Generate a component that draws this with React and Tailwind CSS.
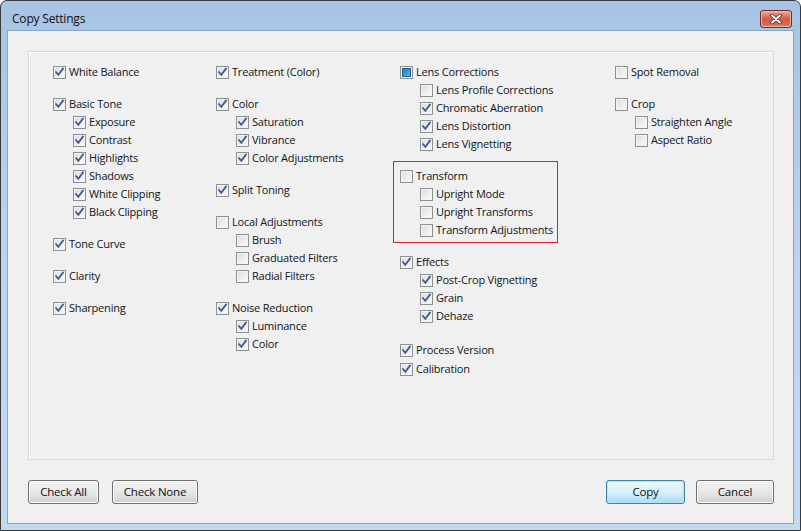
import React from "react";

const columns = [
  [
    { label: "White Balance", state: "on" },
    {
      label: "Basic Tone",
      state: "on",
      gap: "mt-[14px]",
      children: [
        ["Exposure", "on"],
        ["Contrast", "on"],
        ["Highlights", "on"],
        ["Shadows", "on"],
        ["White Clipping", "on"],
        ["Black Clipping", "on"],
      ],
    },
    { label: "Tone Curve", state: "on", gap: "mt-[14px]" },
    { label: "Clarity", state: "on", gap: "mt-[14px]" },
    { label: "Sharpening", state: "on", gap: "mt-[14px]" },
  ],
  [
    { label: "Treatment (Color)", state: "on" },
    {
      label: "Color",
      state: "on",
      gap: "mt-[14px]",
      children: [
        ["Saturation", "on"],
        ["Vibrance", "on"],
        ["Color Adjustments", "on"],
      ],
    },
    { label: "Split Toning", state: "on", gap: "mt-[14px]" },
    {
      label: "Local Adjustments",
      state: "off",
      gap: "mt-[14px]",
      children: [
        ["Brush", "off"],
        ["Graduated Filters", "off"],
        ["Radial Filters", "off"],
      ],
    },
    {
      label: "Noise Reduction",
      state: "on",
      gap: "mt-[14px]",
      children: [
        ["Luminance", "on"],
        ["Color", "on"],
      ],
    },
  ],
  [
    {
      label: "Lens Corrections",
      state: "mixed",
      children: [
        ["Lens Profile Corrections", "off"],
        ["Chromatic Aberration", "on"],
        ["Lens Distortion", "on"],
        ["Lens Vignetting", "on"],
      ],
    },
    {
      label: "Transform",
      state: "off",
      boxed: true,
      children: [
        ["Upright Mode", "off"],
        ["Upright Transforms", "off"],
        ["Transform Adjustments", "off"],
      ],
    },
    {
      label: "Effects",
      state: "on",
      gap: "mt-[10px]",
      children: [
        ["Post-Crop Vignetting", "on"],
        ["Grain", "on"],
        ["Dehaze", "on"],
      ],
    },
    { label: "Process Version", state: "on", gap: "mt-[16px]" },
    { label: "Calibration", state: "on", gap: "mt-[1px]" },
  ],
  [
    { label: "Spot Removal", state: "off" },
    {
      label: "Crop",
      state: "off",
      gap: "mt-[14px]",
      children: [
        ["Straighten Angle", "off"],
        ["Aspect Ratio", "off"],
      ],
    },
  ],
];

function Checkbox({ state }) {
  return (
    <span className="relative flex h-[13px] w-[13px] shrink-0 items-center justify-center border border-[#8e8f8f] bg-gradient-to-br from-[#dcdcdc] to-[#fbfbfb]">
      <span className="absolute inset-0 border border-[#f4f4f4]" />
      {state === "on" && (
        <svg width="11" height="11" viewBox="0 0 11 11" className="relative">
          <path
            d="M2 5.2 L4.3 7.8 L9 1.6"
            fill="none"
            stroke="#3f5a96"
            strokeWidth="1.8"
            strokeLinecap="square"
          />
        </svg>
      )}
      {state === "mixed" && (
        <span className="relative h-[9px] w-[9px] border border-[#1d5f8f] bg-gradient-to-br from-[#2b7cb4] via-[#3b97cb] to-[#64b8df]" />
      )}
    </span>
  );
}

function Row({ label, state, sub }) {
  return (
    <div className={`flex h-[18px] items-center ${sub ? "pl-[20px]" : ""}`}>
      <Checkbox state={state} />
      <span className="ml-[3px] whitespace-nowrap text-[#0f1522]">{label}</span>
    </div>
  );
}

function Group({ group }) {
  const body = (
    <>
      <Row label={group.label} state={group.state} />
      {group.children?.map(([label, state]) => (
        <Row key={label} label={label} state={state} sub />
      ))}
    </>
  );
  if (group.boxed) {
    return (
      <div className="ml-[-7px] mt-[8px] w-[165px] border border-[#e0212c] pb-[3px] pl-[6px] pt-[5px]">
        {body}
      </div>
    );
  }
  return <div className={group.gap || ""}>{body}</div>;
}

function Button({ children, primary, className }) {
  return (
    <button
      className={`flex h-[24px] items-center justify-center rounded-[3px] border ${
        primary
          ? "border-[#3c7fb1] bg-gradient-to-b from-[#eaf6fd] via-[#d9f0fc] to-[#a7d9f5] shadow-[inset_0_0_0_1px_#b9e3fb]"
          : "border-[#707070] bg-gradient-to-b from-[#f2f2f2] via-[#e8e8e8] to-[#d0d0d0] shadow-[inset_0_0_0_1px_#fcfcfc]"
      } text-[#111] ${className}`}
    >
      {children}
    </button>
  );
}

export default function App() {
  return (
    <div
      className="flex h-[531px] w-[801px] flex-col overflow-hidden rounded-t-[7px] border border-[#3a3a3a] bg-gradient-to-b from-[#a7c4e4] via-[#bcd4ee] to-[#c3d9f0] text-[11px] tracking-[-0.2px]"
      style={{ fontFamily: '"Segoe UI", "Open Sans", "Noto Sans", sans-serif' }}
    >
      <div className="flex h-[29px] shrink-0 items-center justify-between pl-[11px] pr-[8px] pt-[7px]">
        <span className="text-[12px] text-[#111]">Copy Settings</span>
        <div className="flex h-[18px] w-[32px] items-center justify-center rounded-[3px] border border-[#6e2a22] bg-gradient-to-b from-[#e9a99a] via-[#cf5a44] to-[#d8735c] shadow-[inset_0_0_0_1px_#f0b8a8]">
          <svg width="14" height="10" viewBox="0 0 14 10">
            <path
              d="M3 1.5 L11 8.5 M11 1.5 L3 8.5"
              stroke="#5a2a24"
              strokeWidth="3.6"
              strokeLinecap="round"
            />
            <path
              d="M3 1.5 L11 8.5 M11 1.5 L3 8.5"
              stroke="#ffffff"
              strokeWidth="2"
              strokeLinecap="round"
            />
          </svg>
        </div>
      </div>
      <div className="mx-[6px] mb-[6px] flex flex-1 flex-col border border-[#8ba6c4] bg-[#f0f0f0] pl-[20px] pr-[19px] pt-[20px]">
        <div className="grid h-[409px] grid-cols-[163px_184px_215px_1fr] border border-[#d9dadb] pl-[24px] pt-[11px] shadow-[inset_1px_1px_0_#ffffff]">
          {columns.map((col, i) => (
            <div key={i} className="flex flex-col">
              {col.map((g) => (
                <Group key={g.label} group={g} />
              ))}
            </div>
          ))}
        </div>
        <div className="mt-[20px] flex items-center text-[11.5px]">
          <Button className="w-[71px]">Check All</Button>
          <Button className="ml-[13px] w-[86px]">Check None</Button>
          <Button primary className="ml-auto w-[79px]">
            Copy
          </Button>
          <Button className="ml-[11px] w-[78px]">Cancel</Button>
        </div>
      </div>
    </div>
  );
}
